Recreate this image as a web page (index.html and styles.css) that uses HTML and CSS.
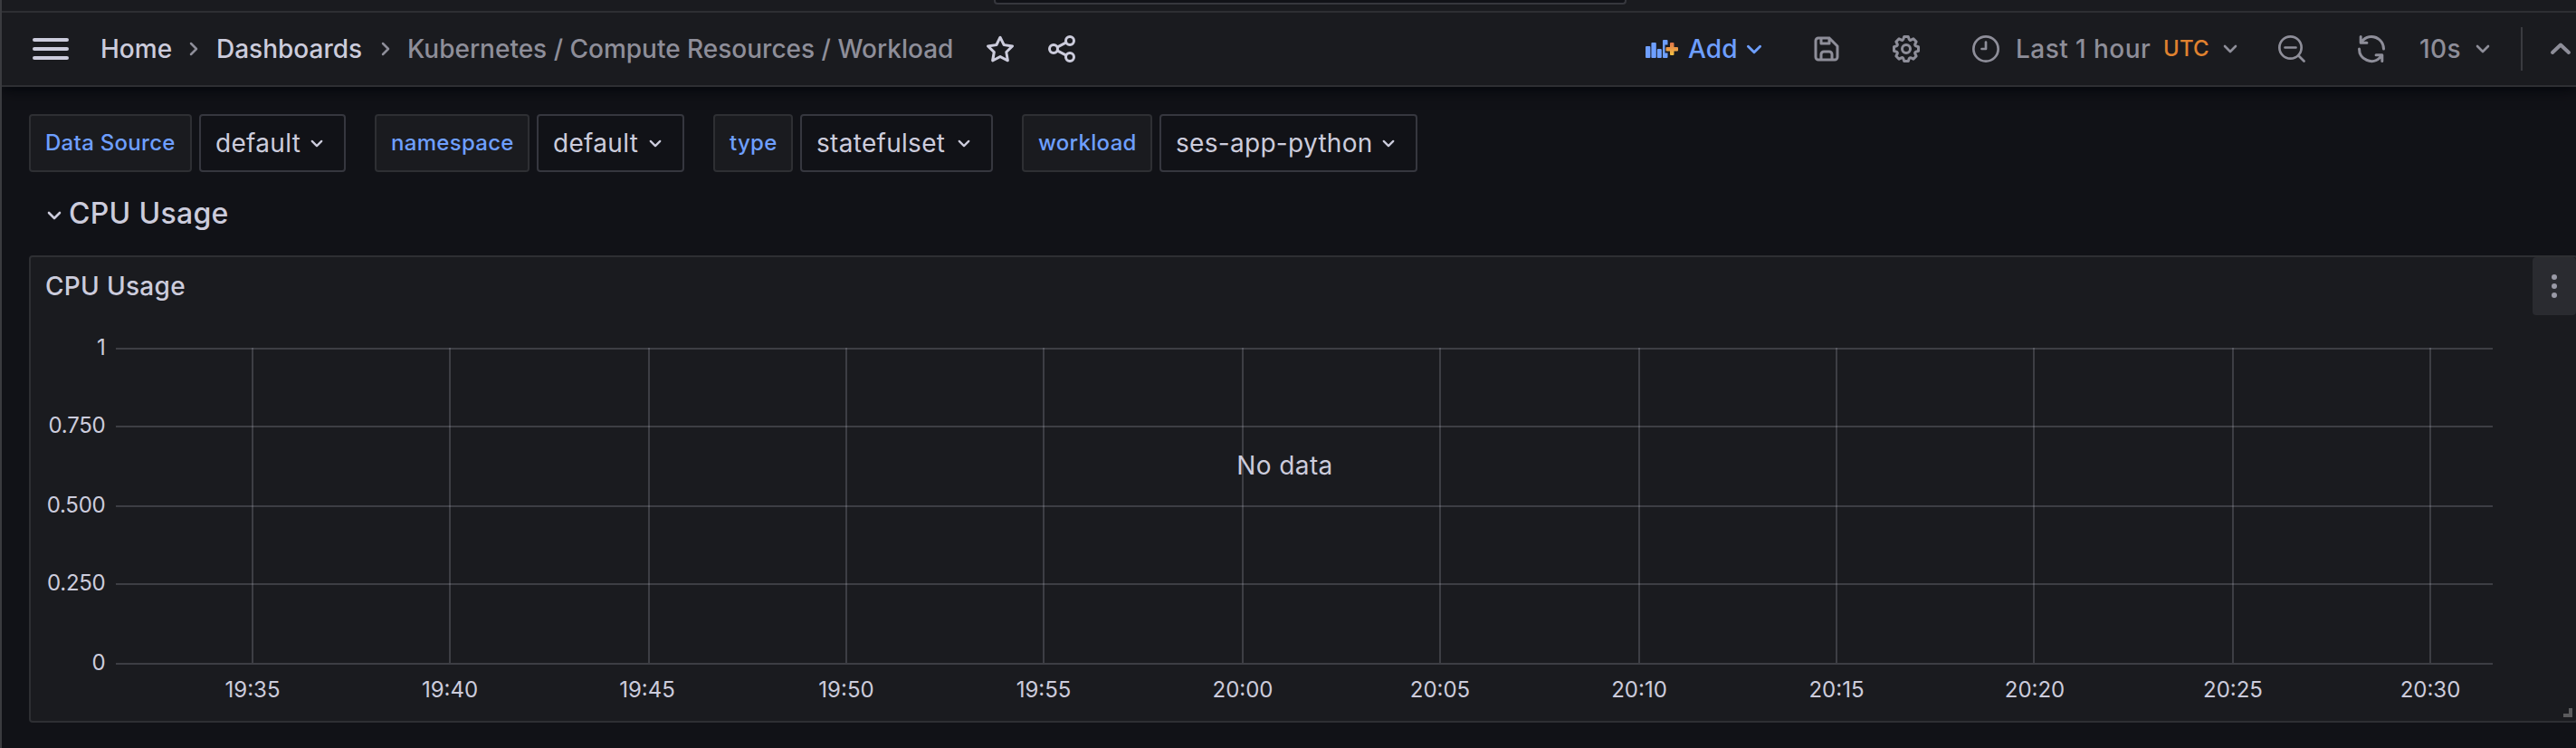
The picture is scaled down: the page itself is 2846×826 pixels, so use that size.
FILE: index.html
```html
<!DOCTYPE html>
<html lang="en">
<head>
<meta charset="utf-8">
<title>Kubernetes / Compute Resources / Workload</title>
<link rel="stylesheet" href="styles.css">
</head>
<body>
<svg width="0" height="0" class="defs">
  <defs>
    <linearGradient id="plus" x1="0" y1="0" x2="0" y2="1"><stop offset="0" stop-color="#e0734a"/><stop offset="1" stop-color="#f5c242"/></linearGradient>
    <symbol id="down" viewBox="0 0 16 10"><path d="M2 2l6 6 6-6" fill="none" stroke="currentColor" stroke-width="2.6" stroke-linecap="round" stroke-linejoin="round"/></symbol>
    <symbol id="right" viewBox="0 0 10 16"><path d="M2 2l6 6-6 6" fill="none" stroke="currentColor" stroke-width="2.5" stroke-linecap="round" stroke-linejoin="round"/></symbol>
  </defs>
</svg>
<div class="app">
  <div class="topbar"><div class="search"></div></div>
  <header class="toolbar">
    <div class="menu"><i></i><i></i><i></i></div>
    <nav class="crumbs">
      <span class="c-home">Home</span>
      <svg class="sep"><use href="#right"/></svg>
      <span class="c-dash">Dashboards</span>
      <svg class="sep"><use href="#right"/></svg>
      <span class="c-now">Kubernetes / Compute Resources / Workload</span>
    </nav>
    <svg class="icon star" viewBox="0 0 24 24"><path fill="currentColor" d="M22,9.67A1,1,0,0,0,21.14,9l-5.69-.83L12.9,3a1,1,0,0,0-1.8,0L8.55,8.16,2.86,9a1,1,0,0,0-.81.68,1,1,0,0,0,.25,1l4.13,4-1,5.68A1,1,0,0,0,6.9,21.44L12,18.77l5.1,2.67a.93.93,0,0,0,.46.12,1,1,0,0,0,.59-.19,1,1,0,0,0,.4-1l-1-5.68,4.13-4A1,1,0,0,0,22,9.67Zm-6.15,4a1,1,0,0,0-.29.88l.72,4.2-3.76-2a1.06,1.06,0,0,0-.94,0l-3.76,2,.72-4.2a1,1,0,0,0-.29-.88l-3-3,4.21-.61a1,1,0,0,0,.76-.55L12,5.7l1.88,3.82a1,1,0,0,0,.76.55l4.21.61Z"/></svg>
    <svg class="icon share" viewBox="0 0 24 24"><g fill="none" stroke="currentColor" stroke-width="2"><circle cx="18" cy="6" r="3"/><circle cx="6" cy="12" r="3"/><circle cx="18" cy="18" r="3"/><path d="M8.7 10.7l6.6-3.4M8.7 13.3l6.6 3.4"/></g></svg>
    <div class="actions">
      <div class="add">
        <svg class="addicon" viewBox="0 0 38 24"><g fill="currentColor"><rect x="1" y="9" width="5.400" height="13" rx="1"/><rect x="7.4" y="5" width="5.400" height="17" rx="1"/><rect x="13.8" y="12" width="5" height="10" rx="1"/><path d="M21 2h3.500a1 1 0 0 1 1 1v4.500h-3v9h3V21a1 1 0 0 1-1 1H21a1 1 0 0 1-1-1V3a1 1 0 0 1 1-1z"/></g><path fill="url(#plus)" d="M29 5h2.500a1 1 0 0 1 1 1v4H36a1 1 0 0 1 1 1v2.500a1 1 0 0 1-1 1h-3.500V18a1 1 0 0 1-1 1H29a1 1 0 0 1-1-1v-3.500h-3.500a1 1 0 0 1-1-1V11a1 1 0 0 1 1-1H28V6a1 1 0 0 1 1-1z"/></svg>
        <span>Add</span>
        <svg class="chev-add"><use href="#down"/></svg>
      </div>
      <svg class="icon save" viewBox="0 0 24 24"><path fill="currentColor" d="m20.710 9.290-6-6a1 1 0 0 0-.32-.21A1.090 1.090 0 0 0 14 3H6a3 3 0 0 0-3 3v12a3 3 0 0 0 3 3h12a3 3 0 0 0 3-3v-8a1 1 0 0 0-.29-.71ZM9 5h4v2H9Zm6 14H9v-3a1 1 0 0 1 1-1h4a1 1 0 0 1 1 1Zm4-1a1 1 0 0 1-1 1h-1v-3a3 3 0 0 0-3-3h-4a3 3 0 0 0-3 3v3H6a1 1 0 0 1-1-1V6a1 1 0 0 1 1-1h1v3a1 1 0 0 0 1 1h6a1 1 0 0 0 1-1V6.410l4 4Z"/></svg>
      <svg class="icon gear" viewBox="0 0 24 24"><path fill="currentColor" d="M21.320,9.550l-1.890-.63.890-1.780A1,1,0,0,0,20.130,6L18,3.870a1,1,0,0,0-1.150-.19l-1.780.89-.63-1.890A1,1,0,0,0,13.500,2h-3a1,1,0,0,0-.950.680L8.920,4.570,7.140,3.680A1,1,0,0,0,6,3.870L3.870,6a1,1,0,0,0-.19,1.150l.89,1.780-1.890.63A1,1,0,0,0,2,10.500v3a1,1,0,0,0,.68.950l1.890.63-.89,1.780A1,1,0,0,0,3.870,18L6,20.130a1,1,0,0,0,1.150.19l1.780-.89.63,1.890a1,1,0,0,0,.95.680h3a1,1,0,0,0,.95-.68l.63-1.890,1.780.89A1,1,0,0,0,18,20.130L20.130,18a1,1,0,0,0,.19-1.150l-.89-1.780,1.890-.63A1,1,0,0,0,22,13.500v-3A1,1,0,0,0,21.320,9.550ZM20,12.780l-1.200.4A2,2,0,0,0,17.640,16l.57,1.140-1.100,1.100L16,17.640a2,2,0,0,0-2.790,1.160l-.4,1.200H11.220l-.4-1.200A2,2,0,0,0,8,17.640l-1.140.57-1.100-1.100L6.360,16A2,2,0,0,0,5.200,13.180L4,12.780V11.220l1.200-.4A2,2,0,0,0,6.360,8L5.790,6.890l1.100-1.100L8,6.360A2,2,0,0,0,10.820,5.200l.4-1.200h1.560l.4,1.200A2,2,0,0,0,16,6.360l1.140-.57,1.100,1.100L17.640,8a2,2,0,0,0,1.160,2.790l1.200.4ZM12,8a4,4,0,1,0,4,4A4,4,0,0,0,12,8Zm0,6a2,2,0,1,1,2-2A2,2,0,0,1,12,14Z"/></svg>
      <svg class="icon clock" viewBox="0 0 24 24"><g fill="none" stroke="currentColor" stroke-width="1.800"><circle cx="12" cy="12" r="9.100"/><path d="M12 7v5H9" stroke-linecap="round" stroke-linejoin="round"/></g></svg>
      <span class="range">Last 1 hour</span>
      <span class="utc">UTC</span>
      <svg class="chev-sm"><use href="#down"/></svg>
      <svg class="icon zoomout" viewBox="0 0 24 24"><g fill="none" stroke="currentColor" stroke-width="1.800" stroke-linecap="round"><circle cx="11" cy="11" r="8.100"/><path d="M7 11h8M17 17l4 4"/></g></svg>
      <svg class="icon sync" viewBox="0 0 24 24"><path fill="currentColor" d="M19.910,15.510H15.380a1,1,0,0,0,0,2h2.400A8,8,0,0,1,4,12a1,1,0,0,0-2,0,10,10,0,0,0,16.880,7.230V21a1,1,0,0,0,2,0V16.500A1,1,0,0,0,19.910,15.510ZM12,2A10,10,0,0,0,5.120,4.770V3a1,1,0,0,0-2,0V7.500a1,1,0,0,0,1,1h4.500a1,1,0,0,0,0-2H6.220A8,8,0,0,1,20,12a1,1,0,0,0,2,0A10,10,0,0,0,12,2Z"/></svg>
      <span class="interval">10s</span>
      <svg class="chev-sm"><use href="#down"/></svg>
      <div class="divider"></div>
      <svg class="up" viewBox="0 0 24 16"><path d="M3 12l9-8.500 9 8.500" fill="none" stroke="currentColor" stroke-width="4" stroke-linecap="round" stroke-linejoin="round"/></svg>
    </div>
  </header>
  <main class="page">
    <div class="vars">
      <div class="var"><label class="w-ds">Data Source</label><div class="select s-ds">default<svg><use href="#down"/></svg></div></div>
      <div class="var"><label class="w-ns">namespace</label><div class="select s-ns">default<svg><use href="#down"/></svg></div></div>
      <div class="var"><label class="w-ty">type</label><div class="select s-ty">statefulset<svg><use href="#down"/></svg></div></div>
      <div class="var"><label class="w-wl">workload</label><div class="select s-wl">ses-app-python<svg><use href="#down"/></svg></div></div>
    </div>
    <div class="row"><svg><use href="#down"/></svg><h2>CPU Usage</h2></div>
    <section class="panel">
      <div class="panel-head"><h3>CPU Usage</h3><div class="more"><i></i><i></i><i></i></div></div>
      <svg class="chart" width="2812" height="448" viewBox="34 348 2812 448">
        <g class="grid">
          <path d="M128 385H2754M128 471H2754M128 559H2754M128 645H2754M128 733H2754"/>
          <path d="M279 384V732M497 384V732M717 384V732M935 384V732M1153 384V732M1373 384V732M1591 384V732M1811 384V732M2029 384V732M2247 384V732M2467 384V732M2685 384V732"/>
        </g>
        <g class="ylab"><text x="116.500" y="392">1</text><text x="116.500" y="478">0.750</text><text x="116.500" y="566">0.500</text><text x="116.500" y="652">0.250</text><text x="116.500" y="740">0</text></g>
        <g class="xlab"><text x="279" y="770">19:35</text><text x="497" y="770">19:40</text><text x="715" y="770">19:45</text><text x="935" y="770">19:50</text><text x="1153" y="770">19:55</text><text x="1373" y="770">20:00</text><text x="1591" y="770">20:05</text><text x="1811" y="770">20:10</text><text x="2029" y="770">20:15</text><text x="2248" y="770">20:20</text><text x="2467" y="770">20:25</text><text x="2685" y="770">20:30</text></g>
        <text class="nodata" x="1419.500" y="524">No data</text>
        <path class="grip" d="M2840 782V790H2832" />
      </svg>
    </section>
  </main>
</div>
</body>
</html>
```
FILE: styles.css
```css
* { box-sizing: border-box; }
body { margin: 0; background: #111217; color: #ccccdc; font: 400 28px/44px Inter, "Liberation Sans", sans-serif; letter-spacing: 0.3px; }
svg { display: block; flex: none; }
.defs { position: absolute; }
.app { width: 2846px; height: 826px; overflow: hidden; border-left: 2px solid #3a3b3f; }
.topbar { position: relative; z-index: 1; height: 14px; background: #1a1b1f; border-bottom: 2px solid #2e2f33; }
.search { width: 699px; height: 5px; margin-left: 1096px; background: #111217; border: 2px solid #36373d; border-top: 0; border-radius: 0 0 4px 4px; }
.toolbar { display: flex; align-items: center; height: 82px; padding-left: 34px; background: #1a1b1f; border-bottom: 2px solid #2e2f33; box-shadow: 0 2px 16px #010409; white-space: nowrap; }
.menu { display: grid; gap: 6px; width: 40px; margin-right: 35px; }
.menu i { height: 4px; border-radius: 2px; background: #ccccdc; }
.crumbs { display: flex; align-items: center; font-weight: 500; letter-spacing: 0; }
.c-home { width: 98px; }
.c-dash { width: 182px; }
.c-now { width: 637px; color: #8e8e99; }
.sep { width: 10px; height: 16px; margin-right: 20px; color: #8e8e99; }
.crumbs .sep + .c-now { margin-left: -1px; }
.icon { width: 36px; height: 36px; }
.share { margin-left: 32px; }
.actions { display: flex; align-items: center; margin-left: 626px; color: #8e8e99; font-weight: 500; letter-spacing: 0.45px; }
.add { display: flex; align-items: center; width: 183px; color: #6e9fff; }
.add span { width: 64px; letter-spacing: 0.2px; }
.addicon { width: 38px; height: 24px; margin-right: 10px; }
.chev-add { width: 18px; height: 11px; }
.gear, .clock { margin-left: 52px; }
.range { width: 163px; margin-left: 15px; }
.utc { width: 66px; font-size: 24px; letter-spacing: 0.2px; color: #e0822f; }
.chev-sm { width: 16px; height: 10px; }
.zoomout { margin-left: 42px; }
.sync { margin-left: 52px; }
.interval { width: 62px; margin-left: 35px; }
.divider { width: 2px; height: 48px; margin-left: 34px; background: #3a3b40; }
.up { width: 24px; height: 16px; margin-left: 30px; }
.page { padding: 30px 0 0 30px; }
.vars { display: flex; gap: 32px; }
.var { display: flex; gap: 8px; }
.var label, .select { display: flex; align-items: center; height: 64px; padding-left: 16px; border: 2px solid #2e2f33; border-radius: 4px; }
.var label { background: #1a1b1f; color: #6e9fff; font-size: 24px; font-weight: 500; }
.select { padding-right: 23px; border-color: #36373f; background: #111217; }
.select svg { width: 14px; height: 9px; margin-left: auto; }
.w-ds { width: 180px; } .s-ds { width: 162px; }
.w-ns { width: 171px; } .s-ns { width: 163px; }
.w-ty { width: 88px; } .s-ty { width: 213px; }
.w-wl { width: 144px; } .s-wl { width: 285px; }
.row { display: flex; align-items: center; height: 92px; padding: 0 0 0 20px; }
.row svg { width: 16px; height: 10px; margin: 4px 8px 0 0; }
h2, h3 { margin: 0; font-weight: 500; }
h2 { font-size: 32px; }
h3 { font-size: 28px; }
.panel { width: 2816px; height: 516px; background: #1a1b1f; border: 2px solid #2e2f33; border-radius: 4px; }
.panel-head { display: flex; justify-content: space-between; align-items: center; height: 64px; padding-left: 16px; }
.more { display: grid; align-content: center; justify-content: center; gap: 4px; width: 48px; height: 64px; border-radius: 4px; background: #2a2b30; }
.more i { width: 6px; height: 6px; border-radius: 50%; background: #9a9aa6; }
.grid path { fill: none; stroke: #ccccdc; stroke-opacity: 0.2; stroke-width: 2; }
.chart text { fill: #ccccdc; font-size: 24px; letter-spacing: 0; }
.chart .ylab text { text-anchor: end; letter-spacing: -0.25px; }
.xlab text, .chart .nodata { text-anchor: middle; }
.chart .nodata { font-size: 28px; letter-spacing: 0.4px; }
.chart .grip { fill: none; stroke: #5b5b5d; stroke-width: 4; }
```
